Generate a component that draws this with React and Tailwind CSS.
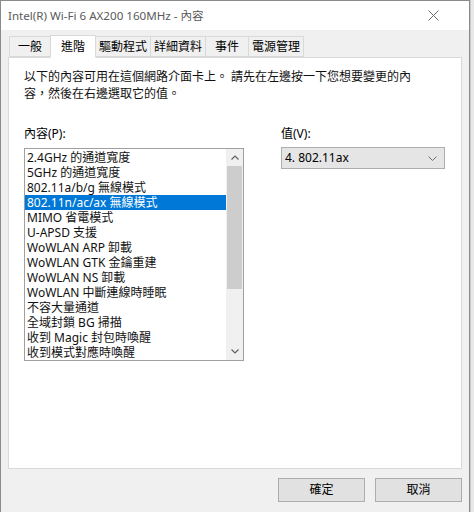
import { useState } from 'react'

const tabs = [
  { label: '一般',     w: 'w-[42px]' },
  { label: '進階',     w: 'w-[46px]' },
  { label: '驅動程式', w: 'w-[56px]' },
  { label: '詳細資料', w: 'w-[56px]' },
  { label: '事件',     w: 'w-[44px]' },
  { label: '電源管理', w: 'w-[56px]' },
]

const props = [
  '2.4GHz 的通道寬度',
  '5GHz 的通道寬度',
  '802.11a/b/g 無線模式',
  '802.11n/ac/ax 無線模式',
  'MIMO 省電模式',
  'U-APSD 支援',
  'WoWLAN ARP 卸載',
  'WoWLAN GTK 金鑰重建',
  'WoWLAN NS 卸載',
  'WoWLAN 中斷連線時睡眠',
  '不容大量通道',
  '全域封鎖 BG 掃描',
  '收到 Magic 封包時喚醒',
  '收到模式對應時喚醒',
]

const font = { fontFamily: '"Noto Sans", "Noto Sans CJK TC", sans-serif' }

const App = () => {
  const [activeTab, setActiveTab] = useState(1)
  const [selected,  setSelected]  = useState(3)

  return (
    <div className="w-[474px] h-[512px] flex bg-[#e8e8e8] overflow-hidden text-[12px] text-black" style={font}>
      <div className="w-[470px] h-full flex flex-col bg-[#f0f0f0] border border-[#8a8a8a] border-b-0">
        {/* Title bar */}
        <div className="h-[29px] shrink-0 bg-white flex items-center justify-between pl-[7px] pr-[30px]">
          <span className="text-[#5a5a5a] text-[11.6px] leading-none">Intel(R) Wi-Fi 6 AX200 160MHz - 內容</span>
          <svg width="11" height="11" viewBox="0 0 11 11" className="text-[#6a6a6a]">
            <path d="M0.5 0.5 L10.5 10.5 M10.5 0.5 L0.5 10.5" stroke="currentColor" strokeWidth="1" fill="none" />
          </svg>
        </div>

        {/* Tabs */}
        <div className="h-[28px] shrink-0 flex items-end pl-[8px] relative z-10">
          {tabs.map((t, i) => (
            <button
              key={t.label}
              onClick={() => setActiveTab(i)}
              className={`${t.w} shrink-0 whitespace-nowrap flex items-center justify-center border border-[#d9d9d9] -mr-px leading-none ${
                i === activeTab
                  ? 'h-[23px] bg-white border-b-white'
                  : 'h-[21px] mb-[1px] bg-[#f0f0f0]'
              }`}
            >
              {t.label}
            </button>
          ))}
        </div>

        {/* Panel */}
        <div className="mx-[7px] -mt-px h-[412px] bg-white border border-[#d9d9d9] pt-[10px] px-[15px]">
          <p className="leading-[17px] text-[#111] max-w-[391px]">
            以下的內容可用在這個網路介面卡上。 請先在左邊按一下您想要變更的內容，然後在右邊選取它的值。
          </p>

          <div className="flex mt-[24px] gap-[37px]">
            {/* Property list */}
            <div className="w-[220px]">
              <div className="leading-[16px] mb-[6px]">內容(P):</div>
              <div className="h-[213px] border border-[#a0a0a0] flex">
                <div className="flex-1 flex flex-col pt-[1px]">
                  {props.map((p, i) => (
                    <div
                      key={p}
                      onClick={() => setSelected(i)}
                      className={`h-[15px] leading-[15px] pl-[2px] whitespace-nowrap cursor-default ${
                        i === selected ? 'bg-[#0078d7] text-white' : 'text-[#111]'
                      }`}
                    >
                      {p}
                    </div>
                  ))}
                </div>
                <div className="w-[17px] bg-[#f0f0f0] flex flex-col">
                  <div className="h-[17px] flex items-center justify-center">
                    <svg width="8" height="5" viewBox="0 0 8 5">
                      <path d="M0.5 4.5 L4 1 L7.5 4.5" stroke="#606060" strokeWidth="1.2" fill="none" />
                    </svg>
                  </div>
                  <div className="h-[123px] mx-[1px] bg-[#cdcdcd]" />
                  <div className="flex-1" />
                  <div className="h-[17px] flex items-center justify-center">
                    <svg width="8" height="5" viewBox="0 0 8 5">
                      <path d="M0.5 0.5 L4 4 L7.5 0.5" stroke="#606060" strokeWidth="1.2" fill="none" />
                    </svg>
                  </div>
                </div>
              </div>
            </div>

            {/* Value */}
            <div className="w-[164px]">
              <div className="leading-[16px] mb-[5px]">值(V):</div>
              <div className="h-[22px] bg-[#e5e5e5] border border-[#adadad] flex items-center justify-between pl-[3px] pr-[7px]">
                <span>4. 802.11ax</span>
                <svg width="9" height="5" viewBox="0 0 9 5">
                  <path d="M0.5 0.5 L4.5 4.5 L8.5 0.5" stroke="#707070" strokeWidth="1" fill="none" />
                </svg>
              </div>
            </div>
          </div>
        </div>

        {/* Buttons */}
        <div className="flex justify-end gap-[10px] pr-[7px] mt-[9px]">
          <button className="w-[87px] h-[24px] bg-[#e1e1e1] border border-[#adadad] leading-none">確定</button>
          <button className="w-[87px] h-[24px] bg-[#e1e1e1] border border-[#adadad] leading-none">取消</button>
        </div>
      </div>
      <div className="flex-1 border-l border-[#c8c8c8]" />
    </div>
  )
}

export default App
